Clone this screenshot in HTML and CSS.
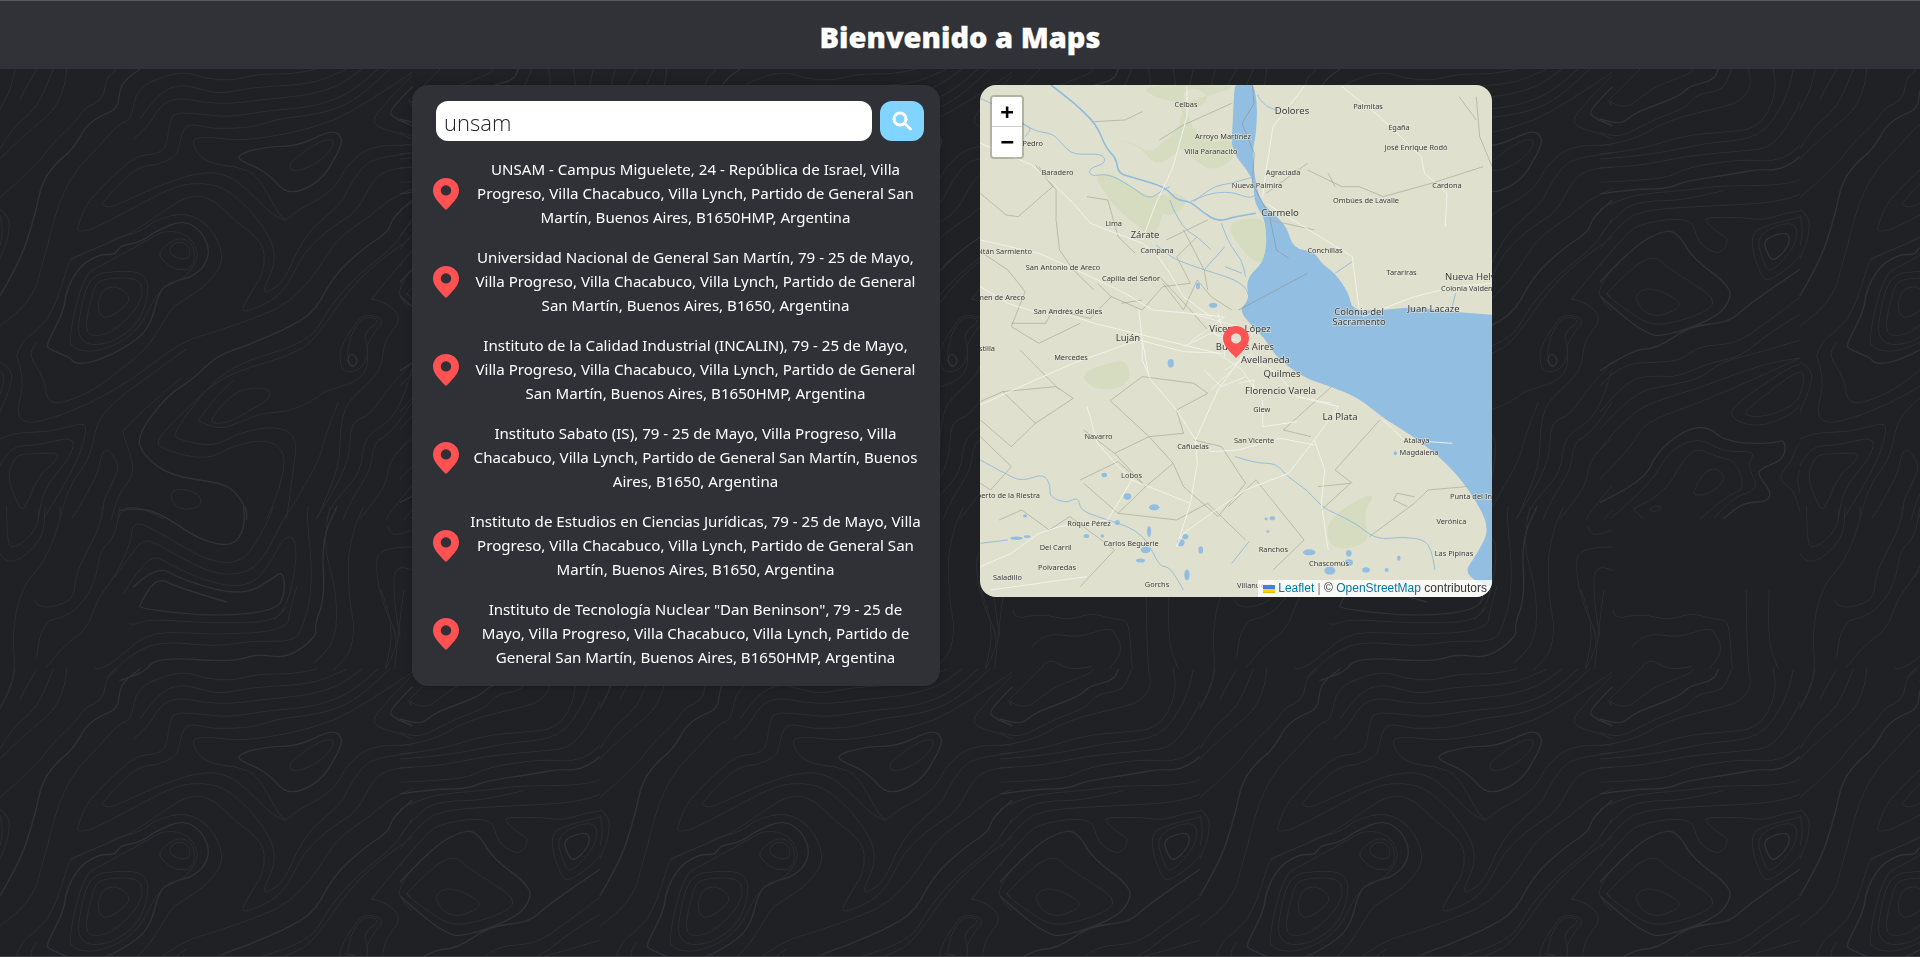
FILE: index.html
```html
<!DOCTYPE html>
<html lang="es">
<head>
<meta charset="utf-8">
<title>Bienvenido a Maps</title>
<link rel="stylesheet" href="styles.css">
<script src="smooth.js" defer></script>
</head>
<body>
<svg class="topo" width="1920" height="957" aria-hidden="true">
  <defs>
    <clipPath id="topo-clip"><rect x="0" y="0" width="600" height="1350"/></clipPath>
    <g id="topo-tile">
      <g transform="translate(0 69) scale(.3333)">
        <path class="c" d="M0 680 60 580 105 440 125 340 170 280 220 240 255 175 300 140 355 120 360 45 420 0"/>
        <path class="t" d="M0 385 100 300 160 220 235 150 250 120 310 90 318 30 350 0M0 270 80 190 160 130 195 50 200 0M0 240 40 170 110 120 160 0M0 120 30 70 45 0M60 90 110 0"/>
        <path class="t" d="M0 770 90 710 130 580 175 400 230 300 300 230 350 170 395 150 405 80 440 40 550 5 620 30 700 35 770 15 880 15 950 0"/>
        <path class="t" d="M420 150 470 75 540 45 600 60 660 75 760 55 860 50 950 40 1020 10 1040 0M400 210 440 180 480 110 530 85 610 100 690 105 800 90 920 80 1020 50 1085 0"/>
        <path class="t" d="M232 480 250 420 290 370 350 310 410 260 470 255 500 235 510 150 530 130 600 135 690 145 800 125 930 115 1040 80 1135 0"/>
        <path class="t" d="M305 405 340 360 420 290 470 290 530 260 535 240 550 175 580 165 640 180 760 175 830 150 960 135 1060 100 1170 0"/>
        <path class="c" d="M695 262 800 232 895 232 1000 180 1030 210 1010 260 960 340 865 380 810 320 770 295Z"/>
        <path class="t" d="M865 290 885 268 960 215 1005 210 990 250 940 290 880 310Z"/>
        <path class="t" d="M1236 10 1060 130 930 180 800 205 710 215 640 205 585 205 578 225 600 265 640 285 720 295 770 320 800 370 840 440 860 455 890 425 960 390 1010 350 1040 290 1110 230 1236 228"/>
        <path class="t" d="M305 405 320 422 400 385 500 340 620 305 700 325 770 390 820 440 860 455"/>
        <path class="t" d="M232 480 240 495 320 460 430 400 530 350 610 340 680 360 760 430 820 520 825 590 790 660 800 672 850 640 880 570 930 480 1020 410 1060 330 1110 270 1236 252"/>
        <path class="t" d="M210 570 330 520 400 490 470 440 570 375 640 390 710 460 790 520 795 600 760 660 725 720 735 730 820 695 870 640 910 550 1000 470 1070 430 1120 330 1170 300 1236 295"/>
        <path class="c" d="M140 825 190 730 200 660 240 590 300 555 345 558 360 530 420 520 470 485 550 452 610 490 632 560 590 620 510 640 475 670 450 780 370 840 280 880 225 885 210 865 145 840Z"/>
        <path class="t" d="M50 860 60 820 130 770 170 700 200 600 210 570 330 520 350 505 420 490 470 450 560 430 630 470 675 560 640 630 560 690 520 710 490 760 440 840 340 920 270 970 180 1005 140 995 135 930 85 860 110 820"/>
        <path class="t" d="M50 860 75 930 50 1030 70 1060 120 1060 260 1010 400 930 540 820 640 790 800 735 880 690 950 610 1010 510 1100 450 1170 390 1236 360"/>
        <path class="t" d="M292 700 310 660 350 650 390 680 380 710 330 745 300 745ZM255 770 280 660 300 630 400 625 430 650 420 710 340 790 270 805ZM232 770 265 620 350 605 430 610 450 660 420 760 340 820 270 830 240 810Z"/>
        <path class="t" d="M205 810 220 840 280 850 370 820 430 760 475 660 560 625 600 560 570 500 500 480 430 520 360 560 300 590 250 620Z"/>
        <path class="t" d="M503 545 530 515 570 530 570 570 530 570ZM475 545 540 500 585 530 580 600 530 605 485 575Z"/>
        <path class="t" d="M0 420 30 440 25 510 0 570M0 440 10 480 0 530M0 880 40 900 30 960 0 1030M0 905 18 920 0 975"/>
        <path class="c" d="M1236 395 1180 440 1165 490 1100 530 1000 620 950 720 880 770 740 830 650 860 580 930 500 980 410 1100 430 1160 510 1220 650 1240 700 1260 740 1320 740 1350"/>
        <path class="t" d="M1236 505 1130 580 1040 670 960 790 900 850 700 910 620 960 550 1030 470 1110 480 1140 620 1175 700 1130 800 1110 860 1150 840 1260 800 1350"/>
        <path class="t" d="M1236 450 1190 530 1080 610 990 710 930 820 700 885 600 980 520 1095 530 1110 640 1135 720 1090 830 1070 893 1105 880 1200 860 1350"/>
        <path class="t" d="M630 1050 710 960 810 955 810 990 740 1030 690 1060 640 1065Z"/>
        <path class="t" d="M595 1055 650 1085 720 1060 790 1030 860 1030 940 995 975 965 1040 950 1100 915 1105 840 1090 790 1145 755 1090 738 1050 800 1040 870 1060 890M595 1055 640 990 700 935"/>
        <path class="c" d="M1045 860 1060 855 1075 875 1060 895 1045 885Z"/>
        <path class="t" d="M1020 880 1030 910 1080 905 1105 860 1100 820 1150 760 1140 745 1090 735 1060 770 1020 840Z"/>
        <path class="t" d="M1236 600 1190 660 1210 700 1236 725M1220 670 1236 690"/>
        <path class="c" d="M1236 55 1165 125 1180 145 1236 170"/>
        <path class="t" d="M1236 20 1115 140 1130 175 1190 190 1236 210M1236 95 1225 100 1236 110"/>
        <path class="t" d="M1115 690 1150 695 1210 745 1150 820 1148 890 1100 950 1040 1000 1020 1080 1020 1190 950 1350M1115 690 1180 610 1236 545"/>
        <path class="t" d="M1236 880 1170 950 1110 1040 1050 1060 1050 1180 950 1350M1236 900 1200 1040 1090 1100 1085 1210 1000 1300 980 1350M1236 1000 1180 1090 1120 1120 1115 1200 1050 1300 1030 1350M1236 1110 1170 1160 1160 1250 1080 1350M1236 1250 1170 1330 1160 1350M1015 1000 975 1100 960 1170 880 1310 850 1350"/>
        <path class="t" d="M0 1110 40 1090 150 1090 250 1060 260 1080 240 1160 180 1270 130 1350M0 1190 30 1130 110 1130 225 1100 215 1160 130 1260 115 1350"/>
        <path class="t" d="M25 1210 50 1155 110 1155 175 1150 170 1175 115 1220 75 1320 60 1320 30 1250Z"/>
        <path class="t" d="M215 1350 290 1230 305 1150 325 1140 355 1180 350 1220 310 1290 305 1350M335 1350 350 1280 410 1210 370 1100 370 1080 480 980 540 930M180 1350 200 1260 270 1170 290 1060 340 1000 420 940 560 840"/>
        <path class="t" d="M510 1270 540 1258 600 1275 605 1310 560 1325 520 1310ZM355 1350 365 1315 420 1315 490 1350"/>
      </g>
      <g transform="translate(0 507) scale(.3333)">
        <path class="t" d="M20 0 20 100 40 130 110 70 118 0M0 140 25 185 130 100 135 0M0 600 50 520 35 380 65 240 130 170 180 50 180 0"/>
        <path class="t" d="M105 280 110 300 170 300 225 270 225 200 300 60 310 0M110 450 120 345 200 330 255 280 290 210 300 130 345 90 360 0M140 480 190 415 260 370 295 270 345 210 395 100 395 60 420 45 500 90 620 160 700 170 750 140 810 30 820 0"/>
        <path class="c" d="M360 10 420 0 500 30 600 100 700 120 735 60 730 0"/>
        <path class="t" d="M345 210 380 160 430 95 470 110 620 195 710 205 780 175 860 20M370 260 400 210 460 140 520 180 640 230 740 240 800 190 850 90 885 90 890 170 860 300 820 340"/>
        <path class="c" d="M400 240 470 175 540 215 670 255 750 255 810 220 850 190 855 260 830 310 650 330 420 305 420 290 470 210 530 240 680 285"/>
        <path class="t" d="M390 350 400 355 450 335 630 350 820 345 860 300M285 485 300 490 360 450 450 370 650 385 860 370 870 310 890 240"/>
        <path class="c" d="M360 520 430 500 470 450 700 465 770 440 860 455 950 390 945 350 975 270 965 100 1010 0"/>
        <path class="t" d="M320 510 370 460 470 400 650 420 760 400 880 405 910 360 940 230 920 20 925 0M1165 60 1170 90 1236 70M1210 40 1236 10M1236 120 1140 120 1125 180 1150 300 1200 400 1160 480M1236 190 1185 165 1180 270 1200 390M1090 0 1040 100 1050 300 1065 360 1050 440 1000 490M990 0 965 100 1010 250 1010 400 940 470"/>
      </g>
      <g transform="translate(400 69) scale(.3333)" clip-path="url(#topo-clip)">
        <path class="c" d="M0 150 60 170 100 135 150 115 240 80 270 50 340 35 355 0"/>
        <path class="t" d="M25 95 70 125 130 80 170 50 270 15 280 0M25 95 100 20 120 0M0 190 50 210 130 170 180 145 260 115 290 75 370 65 395 0M0 230 90 220 200 155 340 120 420 100 455 50 445 0M0 255 110 245 250 200 360 190 480 180 530 70 520 0M0 270 150 260 320 220 480 210 560 90 580 0M0 295 100 295 260 260 440 245 520 235 600 110 640 0"/>
        <path class="c" d="M0 375 100 360 200 360 260 335 400 315 480 300 530 305 600 270 660 190"/>
        <path class="t" d="M0 340 100 335 210 325 260 295 430 270 520 280 600 240 660 130M0 420 70 385 170 370 250 365 360 350 530 350 620 330 660 280M0 500 60 420 140 395 240 395 370 365M0 540 70 450 150 420 360 410 530 400 620 370 660 330"/>
        <path class="t" d="M0 590 70 500 130 460 270 445 290 500 305 530 360 560 390 510 350 490 315 455 320 445 430 445 490 455 560 430 630 425 630 470 610 560 510 640 480 620 445 495 510 465 600 445"/>
        <path class="c" d="M0 640 100 530 200 480 240 500 280 570 390 650 390 700 340 750 190 805 130 790 20 700 0 680"/>
        <path class="t" d="M20 670 150 550 210 600 250 625 350 690 320 730 190 770 130 760 20 680ZM100 680 150 650 260 705 180 745 130 730ZM465 495 590 450 590 530 510 615 490 580Z"/>
        <path class="c" d="M490 510 565 485 570 530 520 580 500 550Z"/>
        <path class="c" d="M0 905 100 840 170 840 270 770 390 760 440 710 660 560"/>
        <path class="t" d="M0 950 60 885 170 880 240 875 300 830 410 825 500 760 660 640M0 1030 80 930 170 920 230 925 330 880 420 865 510 790 660 700M0 1080 100 970 200 950 300 930 360 880 480 850 660 795M0 1140 90 1030 200 985 290 960 500 880 660 860"/>
        <path class="t" d="M375 1040 440 980 590 880 640 890 630 960 590 1030 470 1080ZM420 1040 480 990 590 905 620 915 600 1000 500 1045ZM0 1230 100 1130 130 1060 330 990 660 840"/>
        <path class="c" d="M0 1300 130 1240 170 1150 250 1085 320 1070 380 1120 520 1125 555 1110 555 1170 480 1200 475 1220 515 1270 500 1300 430 1300 370 1350"/>
        <path class="t" d="M30 1350 150 1250 210 1140 300 1105 370 1150 470 1145 440 1190 480 1260 400 1285 340 1350M100 1320 130 1350M100 1320 190 1280 250 1170 295 1135 350 1165 410 1175 435 1260 390 1275 300 1350M280 1270 310 1210 350 1195 380 1230 330 1275 285 1280ZM150 1315 190 1310 170 1330 150 1325ZM650 1090 590 1120 580 1170 530 1230 580 1260 600 1330 610 1350M660 1130 610 1180 585 1240 630 1340"/>
      </g>
      <g transform="translate(0 590) scale(.459 .3333)">
        <path class="t" d="M900 60 900 90 960 70 1020 92 1070 68 1120 88 1150 90 1155 150 1160 237M940 170 970 125 1040 145 1110 110 1125 137 1140 180 1110 237M960 237 975 200 1020 240 1070 230M1190 0 1190 100 1195 237M1240 0 1235 150 1260 237M880 0 870 100 860 237M830 0 860 100 840 237"/>
      </g>
    </g>
  </defs>
  <use href="#topo-tile"/><use href="#topo-tile" x="600"/><use href="#topo-tile" x="1200"/><use href="#topo-tile" x="1800"/>
  <use href="#topo-tile" y="600"/><use href="#topo-tile" x="600" y="600"/><use href="#topo-tile" x="1200" y="600"/><use href="#topo-tile" x="1800" y="600"/>
</svg>

<header class="topbar"><h1>Bienvenido a Maps</h1></header>

<main class="layout">
  <section class="panel">
    <form class="search">
      <input class="search-input" type="text" value="unsam" aria-label="Buscar">
      <button class="search-btn" type="button" aria-label="Buscar">
        <svg width="24" height="24" viewBox="0 0 24 24"><circle cx="10" cy="10" r="6" class="lens"/><path d="M14.5 14.5 20.5 20" class="lens"/></svg>
      </button>
    </form>
    <ul class="results">
      <li class="result">
        <svg class="pin" viewBox="0 0 26 32"><path fill-rule="evenodd" d="M13 0C5.8 0 0 5.6 0 12.4 0 20 7.6 26.2 13 32c5.4-5.8 13-12 13-19.6C26 5.6 20.2 0 13 0ZM13 7.2a5.2 5.2 0 1 1 0 10.4 5.2 5.2 0 0 1 0-10.4Z"/></svg>
        <p>UNSAM - Campus Miguelete, 24 - República de Israel, Villa<br>Progreso, Villa Chacabuco, Villa Lynch, Partido de General San<br>Martín, Buenos Aires, B1650HMP, Argentina</p>
      </li>
      <li class="result">
        <svg class="pin" viewBox="0 0 26 32"><path fill-rule="evenodd" d="M13 0C5.8 0 0 5.6 0 12.4 0 20 7.6 26.2 13 32c5.4-5.8 13-12 13-19.6C26 5.6 20.2 0 13 0ZM13 7.2a5.2 5.2 0 1 1 0 10.4 5.2 5.2 0 0 1 0-10.4Z"/></svg>
        <p>Universidad Nacional de General San Martín, 79 - 25 de Mayo,<br>Villa Progreso, Villa Chacabuco, Villa Lynch, Partido de General<br>San Martín, Buenos Aires, B1650, Argentina</p>
      </li>
      <li class="result">
        <svg class="pin" viewBox="0 0 26 32"><path fill-rule="evenodd" d="M13 0C5.8 0 0 5.6 0 12.4 0 20 7.6 26.2 13 32c5.4-5.8 13-12 13-19.6C26 5.6 20.2 0 13 0ZM13 7.2a5.2 5.2 0 1 1 0 10.4 5.2 5.2 0 0 1 0-10.4Z"/></svg>
        <p>Instituto de la Calidad Industrial (INCALIN), 79 - 25 de Mayo,<br>Villa Progreso, Villa Chacabuco, Villa Lynch, Partido de General<br>San Martín, Buenos Aires, B1650HMP, Argentina</p>
      </li>
      <li class="result">
        <svg class="pin" viewBox="0 0 26 32"><path fill-rule="evenodd" d="M13 0C5.8 0 0 5.6 0 12.4 0 20 7.6 26.2 13 32c5.4-5.8 13-12 13-19.6C26 5.6 20.2 0 13 0ZM13 7.2a5.2 5.2 0 1 1 0 10.4 5.2 5.2 0 0 1 0-10.4Z"/></svg>
        <p>Instituto Sabato (IS), 79 - 25 de Mayo, Villa Progreso, Villa<br>Chacabuco, Villa Lynch, Partido de General San Martín, Buenos<br>Aires, B1650, Argentina</p>
      </li>
      <li class="result">
        <svg class="pin" viewBox="0 0 26 32"><path fill-rule="evenodd" d="M13 0C5.8 0 0 5.6 0 12.4 0 20 7.6 26.2 13 32c5.4-5.8 13-12 13-19.6C26 5.6 20.2 0 13 0ZM13 7.2a5.2 5.2 0 1 1 0 10.4 5.2 5.2 0 0 1 0-10.4Z"/></svg>
        <p>Instituto de Estudios en Ciencias Jurídicas, 79 - 25 de Mayo, Villa<br>Progreso, Villa Chacabuco, Villa Lynch, Partido de General San<br>Martín, Buenos Aires, B1650, Argentina</p>
      </li>
      <li class="result">
        <svg class="pin" viewBox="0 0 26 32"><path fill-rule="evenodd" d="M13 0C5.8 0 0 5.6 0 12.4 0 20 7.6 26.2 13 32c5.4-5.8 13-12 13-19.6C26 5.6 20.2 0 13 0ZM13 7.2a5.2 5.2 0 1 1 0 10.4 5.2 5.2 0 0 1 0-10.4Z"/></svg>
        <p>Instituto de Tecnología Nuclear "Dan Beninson", 79 - 25 de<br>Mayo, Villa Progreso, Villa Chacabuco, Villa Lynch, Partido de<br>General San Martín, Buenos Aires, B1650HMP, Argentina</p>
      </li>
    </ul>
  </section>

  <section class="map">
    <svg class="map-base" width="512" height="512" viewBox="0 0 512 512">
      <g transform="translate(-10 -15) scale(.3444 .3333)">
        <path class="green" d="M360 315 410 310 470 350 530 385 580 365 560 430 530 520 505 480 450 440 400 385ZM420 210 490 225 540 290 600 250 610 230 640 260 700 305 770 270 760 200 700 225 640 170 625 100 660 85 750 60 770 45 490 45 540 85 620 100 610 170 560 220 520 250 480 220ZM740 460 830 440 860 460 860 570 830 580 790 540ZM320 910 400 880 450 870 470 920 430 960 350 955ZM1030 1360 1120 1290 1180 1270 1140 1330 1165 1420 1050 1445ZM610 70 660 50 700 90 640 120ZM580 360 640 390 590 440 550 430Z"/>
        <path class="water" d="M770 30 820 30 835 100 830 200 820 240 825 310 840 390 880 430 920 470 938 535 1000 545 1020 580 1060 610 1100 670 1110 720 1190 722 1280 710 1400 725 1516 735 1700 745 1700 1600 1420 1530 1480 1440 1510 1370 1450 1260 1380 1175 1290 1100 1200 1045 1130 985 1050 950 960 920 880 850 860 810 820 770 780 720 812 690 800 625 860 570 860 450 825 400 825 340 805 300 775 265 758 220 762 180 765 100Z"/>
        <g class="lakes">
          <ellipse cx="390" cy="1215" rx="8" ry="7"/><ellipse cx="457" cy="1280" rx="11" ry="10"/><ellipse cx="535" cy="1312" rx="15" ry="9"/><ellipse cx="160" cy="1338" rx="6" ry="5"/><ellipse cx="135" cy="1405" rx="18" ry="5"/><ellipse cx="166" cy="1400" rx="10" ry="4"/><ellipse cx="520" cy="1385" rx="6" ry="16"/><ellipse cx="625" cy="1400" rx="9" ry="8"/><ellipse cx="612" cy="1418" rx="11" ry="11"/><ellipse cx="670" cy="1440" rx="7" ry="11"/><ellipse cx="630" cy="1515" rx="8" ry="16"/><ellipse cx="495" cy="1472" rx="13" ry="6"/><ellipse cx="510" cy="1440" rx="14" ry="10"/><ellipse cx="985" cy="1447" rx="18" ry="9"/><ellipse cx="1100" cy="1450" rx="8" ry="10"/><ellipse cx="1100" cy="1478" rx="12" ry="10"/><ellipse cx="1045" cy="1502" rx="16" ry="12"/><ellipse cx="1150" cy="1500" rx="11" ry="8"/><ellipse cx="1245" cy="1465" rx="5" ry="8"/><ellipse cx="1210" cy="1500" rx="6" ry="6"/><ellipse cx="865" cy="1385" rx="4" ry="4"/><ellipse cx="860" cy="1347" rx="5" ry="4"/><ellipse cx="878" cy="1345" rx="8" ry="6"/><ellipse cx="583" cy="880" rx="9" ry="13"/><ellipse cx="706" cy="706" rx="12" ry="8"/><ellipse cx="662" cy="648" rx="6" ry="10"/><ellipse cx="338" cy="1398" rx="8" ry="6"/><ellipse cx="428" cy="1358" rx="7" ry="8"/><ellipse cx="384" cy="1398" rx="5" ry="5"/><ellipse cx="1235" cy="1150" rx="5" ry="6"/>
        </g>
        <path class="bound" d="M820 45 825 100 790 160 825 250 820 340 870 440 890 540 925 565M780 720 980 610"/>
        <path class="line" d="M30 370 105 435 140 440 240 350 190 285M340 380 400 390 430 500 480 550M550 210 620 165 760 100M30 545 110 600 160 665 120 770 200 820M550 620 640 720 690 780M120 760 220 760 240 720 350 745 410 680 370 640M360 155 450 150 500 125M980 300 1080 350 1130 350 1200 380 1340 340 1490 290M1470 80 1480 200 1516 290M410 680 500 720 560 650 640 640M200 820 320 760M30 995 95 965 190 1060 120 1130 30 1050M190 1060 300 985 250 950 95 965M405 990 520 1100 420 1150 330 1080M520 1100 590 1180 510 1250 430 1175M410 990 500 920 650 940 690 970 600 1020 620 1090 520 1100M650 1110 730 1130 800 1240 720 1340 620 1250 590 1180M600 1350 690 1300 800 1410M750 1310 830 1230 970 1410 880 1500M1010 1250 1105 1240 1020 1320M1190 1050 1060 1200 1110 1240M1050 950 910 1080 990 1100M1290 1280 1240 1270 1230 1290 1270 1310M1440 1250 1330 1260 1290 1300 1160 1400M30 1100 120 1190 60 1260 30 1240M145 840 260 960M85 1350 150 1320 230 1380 290 1340 420 1440 320 1550M320 1230 430 1175M420 1150 510 1250 430 1330 330 1240M430 1330 600 1350M200 290 250 360 250 450 260 540 300 600 360 660M440 700 500 690M620 480 680 600 690 660M690 450 570 510M1040 310 1060 350M980 280 860 370M1420 80 1470 150M870 450 1000 480M560 640 620 720 660 630 700 680 760 720M640 640 600 560 660 500"/>
        <path class="river" d="M235 45 280 80 330 125 370 170 395 235 425 265 430 310 480 325 550 345 580 365 600 390 640 395 680 430 720 455 770 440 830 430"/>
        <path class="river thin" d="M150 160 190 185 240 190 270 225 300 255 385 250 395 280 345 295 350 320 400 310 470 350 520 390 560 360 580 350M650 395 700 350 760 340 825 320M640 395 690 370 760 365 810 385 830 375M580 390 590 420 625 480 660 500 700 540M540 525 570 550 600 570 680 600 760 625 800 650 810 680M730 460 750 520 790 570 800 620M740 530 680 600M30 85 60 100 110 120 150 160 180 175 160 200M835 75 850 105 895 122M1060 610 1110 575M1410 670 1400 710M740 590 790 610M30 1170 100 1210 150 1235 215 1210 235 1250 230 1280 280 1300 315 1280 320 1320 370 1340 430 1360 480 1380 520 1420 550 1490 580 1490 620 1560M770 1160 830 1180 890 1180 920 1220 980 1260 1020 1310 1060 1330 1120 1360 1180 1410 1260 1400 1320 1410 1340 1440 1350 1500M760 1480 810 1415M30 1420 110 1410"/>
        <path class="road" d="M30 220 180 285 240 340 300 400 350 460 500 520 540 550 580 610 620 680 700 740M630 50 630 140 600 250 590 290 540 400 500 510M30 510 200 550 330 610 450 670 530 720 640 730 735 740M30 650 110 700 200 730 290 735 360 760 480 790 600 820 720 850M490 720 500 810 520 920M970 50 880 170 860 300 850 380M1080 50 1190 140 1310 260 1320 310 1385 370 1380 470M860 400 1000 490 1110 560 1130 720M1140 740 1290 680 1410 650 1516 640M30 1005 190 930 300 880 490 810 620 845 740 850M500 810 500 870 525 930 600 1020 655 1110 660 1180 640 1300 600 1430 620 1390M790 860 720 960 655 1110M650 1115 700 1145 780 1140 900 1105 1000 1125M950 980 1070 1010 1000 1110 925 1210 800 1260 700 1330 620 1390M1000 1110 1030 1200 1020 1300 1040 1440M850 990 850 1070 950 1055M30 1490 120 1450 200 1390 260 1370 400 1350 470 1230 640 1300M340 1010 370 1120 440 1200 470 1230M60 1560 340 1520M1200 1050 1260 1110 1400 1120"/>
        <path class="road urban" d="M720 730 735 790 740 860M640 730 780 770 830 790M700 780 790 860 850 890M640 815 740 740M620 830 700 790 770 810M790 850 820 790M720 850 790 900 830 960M740 900 820 850M700 960 760 900M680 900 730 950 800 920M820 860 890 910 950 980 1050 1000M780 940 825 930 820 970"/>
      </g>
      <g class="labels">
        <text x="206" y="22">Celbas</text><text class="big" x="312" y="29">Dolores</text><text x="388" y="24">Palmitas</text><text x="419" y="45">Egaña</text><text x="436" y="65">José Enrique Rodó</text><text x="243" y="54">Arroyo Martínez</text><text x="231" y="69">Villa Paranacito</text><text class="end" x="63" y="61">San Pedro</text><text x="77.5" y="90">Baradero</text><text x="303" y="90">Agraciada</text><text x="277" y="103">Nueva Palmira</text><text x="467" y="103">Cardona</text><text x="386" y="118">Ombúes de Lavalle</text><text class="big" x="300" y="131">Carmelo</text><text x="133.6" y="141">Lima</text><text class="big" x="165" y="153">Zárate</text><text x="345" y="168">Conchillas</text><text class="end" x="52" y="169">Capitán Sarmiento</text><text x="177" y="168">Campana</text><text x="83" y="185">San Antonio de Areco</text><text x="151" y="196">Capilla del Señor</text><text x="421.5" y="190">Tarariras</text><text class="big start" x="465" y="195">Nueva Helvecia</text><text class="start" x="461" y="206">Colonia Valdense</text><text class="end" x="45" y="215">Carmen de Areco</text><text x="88" y="229">San Andrés de Giles</text><text class="big" x="453.5" y="227">Juan Lacaze</text><text class="big" x="379" y="230">Colonia del</text><text class="big" x="379" y="240">Sacramento</text><text class="big" x="260" y="247">Vicente López</text><text class="big" x="148" y="256">Luján</text><text class="end" x="15" y="266">Castilla</text><text class="big end" x="294" y="265">Buenos Aires</text><text x="91" y="275">Mercedes</text><text class="big" x="285.5" y="278">Avellaneda</text><text class="big" x="302" y="292">Quilmes</text><text class="big" x="300.6" y="309">Florencio Varela</text><text x="281.7" y="327">Glew</text><text class="big" x="360" y="335">La Plata</text><text x="118.5" y="354">Navarro</text><text x="274" y="358">San Vicente</text><text x="436.6" y="358">Atalaya</text><text x="439" y="370">Magdalena</text><text x="213" y="364">Cañuelas</text><text x="151.5" y="393">Lobos</text><text class="end" x="60" y="413">Norberto de la Riestra</text><text class="start" x="470" y="414">Punta del Indio</text><text x="471.4" y="439">Verónica</text><text x="109" y="441">Roque Pérez</text><text x="151" y="461">Carlos Beguerie</text><text x="474" y="471">Las Pipinas</text><text x="75.7" y="465">Del Carril</text><text x="293.4" y="467">Ranchos</text><text x="349" y="481">Chascomús</text><text x="77" y="485">Polvaredas</text><text x="27.5" y="495">Saladillo</text><text x="177" y="502">Gorchs</text><text class="start" x="257" y="503">Villanueva</text>
      </g>
    </svg>
    <svg class="pin map-pin" viewBox="0 0 26 32"><path fill-rule="evenodd" d="M13 0C5.8 0 0 5.6 0 12.4 0 20 7.6 26.2 13 32c5.4-5.8 13-12 13-19.6C26 5.6 20.2 0 13 0ZM13 7.2a5.2 5.2 0 1 1 0 10.4 5.2 5.2 0 0 1 0-10.4Z"/></svg>
    <div class="zoom-bar">
      <a class="zoom-in" href="#" aria-label="Zoom in">+</a>
      <a class="zoom-out" href="#" aria-label="Zoom out">−</a>
    </div>
    <div class="attribution">
      <svg class="flag" width="12" height="8" viewBox="0 0 12 8"><path fill="#4C7BE1" d="M0 0h12v4H0z"/><path fill="#FFD500" d="M0 4h12v3H0z"/><path fill="#E0BC00" d="M0 7h12v1H0z"/></svg>
      <a href="#">Leaflet</a> <span class="sep">|</span> © <a href="#">OpenStreetMap</a> contributors
    </div>
  </section>
</main>
</body>
</html>
```

FILE: styles.css
```css
* { box-sizing: border-box; }

html, body { margin: 0; height: 100%; }

body {
  display: flex;
  flex-direction: column;
  height: 957px;
  overflow: hidden;
  background: #1f2125;
  border-bottom: 1px solid #3b3d42;
  font-family: "Noto Sans", "Open Sans", sans-serif;
  color: #fff;
}

.topo { position: fixed; left: 0; top: 0; z-index: -1; }
.topo path { fill: none; stroke: #2c2e32; stroke-width: 1; stroke-linejoin: round; stroke-linecap: round; vector-effect: non-scaling-stroke; }
.topo path.c { stroke: #303236; stroke-width: 1.4; }

.topbar {
  height: 69px;
  flex: none;
  display: flex;
  align-items: center;
  justify-content: center;
  background: #303237;
  border-top: 1px solid #5a5b5d;
}
.topbar h1 {
  margin: 2px 0 0;
  font-family: "Noto Sans", sans-serif;
  font-size: 29px;
  font-weight: 900;
  color: #fff;
  -webkit-text-stroke: .3px #fff;
}

.layout {
  display: flex;
  justify-content: center;
  align-items: flex-start;
  gap: 40px;
  padding: 16px 16px 0 0;
}

.panel {
  width: 528px;
  padding: 16px 16px 16px 24px;
  background: #2f3136;
  border-radius: 16px;
  box-shadow: 0 0 10px rgba(0, 0, 0, .25);
}

.search { display: flex; gap: 8px; }
.search-input {
  flex: 1;
  min-width: 0;
  height: 40px;
  padding: 2px 8px 0;
  border: 0;
  border-radius: 12px;
  background: #fff;
  color: #222;
  font-family: "Open Sans", sans-serif;
  font-size: 22px;
  font-weight: 300;
}
.search-btn {
  width: 44px;
  height: 40px;
  padding: 0;
  display: flex;
  align-items: center;
  justify-content: center;
  border: 0;
  border-radius: 12px;
  background: #80d4ff;
}
.lens { fill: none; stroke: #fff; stroke-width: 3; stroke-linecap: round; }

.results {
  list-style: none;
  margin: 17px 0 0;
  padding: 0;
  display: flex;
  flex-direction: column;
  gap: 16px;
}
.result {
  display: flex;
  align-items: center;
  gap: 8px;
  height: 72px;
  margin-left: -3px;
}
.result p {
  flex: 1;
  margin: -2px 0 0;
  font-size: 15.1px;
  line-height: 24px;
  text-align: center;
  white-space: nowrap;
}
.pin { width: 26px; height: 32px; flex: none; fill: #ff5252; }

.map {
  position: relative;
  width: 512px;
  height: 512px;
  overflow: hidden;
  border-radius: 16px;
  background: #e0e0ce;
}
.map-base { display: block; filter: blur(.35px); }
.water { fill: #92bfe1; }
.lakes ellipse { fill: #92bfe1; }
.green { fill: #d5dcbf; }
.line { fill: none; stroke: #a9aa98; stroke-width: .7; vector-effect: non-scaling-stroke; }
.bound { fill: none; stroke: #8f9aa3; stroke-width: .8; vector-effect: non-scaling-stroke; }
.river { fill: none; stroke: #8fbbdd; stroke-width: 1.6; stroke-linejoin: round; vector-effect: non-scaling-stroke; }
.river.thin { stroke-width: .9; }
.road { fill: none; stroke: #f4f4ee; stroke-width: .9; stroke-linejoin: round; vector-effect: non-scaling-stroke; }
.road.urban { stroke-width: .8; }
.labels text {
  font-family: "Noto Sans", sans-serif;
  font-size: 7.4px;
  fill: #3a3a3a;
  text-anchor: middle;
  paint-order: stroke;
  stroke: rgba(232, 232, 220, .7);
  stroke-width: 1.4px;
}
.labels text.big { font-size: 9.5px; }
.labels text.end { text-anchor: end; }
.labels text.start { text-anchor: start; }

.map-pin { position: absolute; left: 243px; top: 241px; }

.zoom-bar {
  position: absolute;
  left: 10px;
  top: 10px;
  width: 34px;
  border: 2px solid rgba(0, 0, 0, .2);
  border-radius: 4px;
  background-clip: padding-box;
}
.zoom-bar a {
  display: block;
  width: 30px;
  height: 30px;
  background: #fff;
  color: #000;
  font: bold 22px/30px "DejaVu Sans Mono", "Liberation Mono", monospace;
  text-align: center;
  text-decoration: none;
}
.zoom-in { border-bottom: 1px solid #ccc; border-radius: 2px 2px 0 0; }
.zoom-out { border-radius: 0 0 2px 2px; }

.attribution {
  position: absolute;
  right: 0;
  bottom: 0;
  height: 17px;
  padding: 0 5px;
  background: rgba(255, 255, 255, .8);
  color: #333;
  font: 12px/17px "Liberation Sans", Arial, sans-serif;
  white-space: nowrap;
}
.attribution a { color: #0078a8; text-decoration: none; }
.attribution .sep { color: #777; }
.flag { vertical-align: -1px; }
```

FILE: smooth.js
```js
// Turns the traced contour, river and coast point lists into smooth curves.
document.querySelectorAll('.topo path, .river, .water, .green').forEach(function (path) {
  var out = path.getAttribute('d').split('M').filter(Boolean).map(function (sub) {
    var closed = /Z\s*$/.test(sub);
    var n = sub.replace('Z', '').trim().split(/\s+/).map(Number);
    var p = [];
    for (var i = 0; i + 1 < n.length; i += 2) p.push([n[i], n[i + 1]]);
    var mid = function (a, b) { return ((a[0] + b[0]) / 2) + ' ' + ((a[1] + b[1]) / 2); };
    var d, k;
    if (closed) {
      d = 'M' + mid(p[p.length - 1], p[0]);
      for (k = 0; k < p.length; k++) d += 'Q' + p[k].join(' ') + ' ' + mid(p[k], p[(k + 1) % p.length]);
      return d + 'Z';
    }
    d = 'M' + p[0].join(' ');
    for (k = 1; k < p.length - 1; k++) d += 'Q' + p[k].join(' ') + ' ' + mid(p[k], p[k + 1]);
    return d + 'L' + p[p.length - 1].join(' ');
  });
  path.setAttribute('d', out.join(''));
});
```
